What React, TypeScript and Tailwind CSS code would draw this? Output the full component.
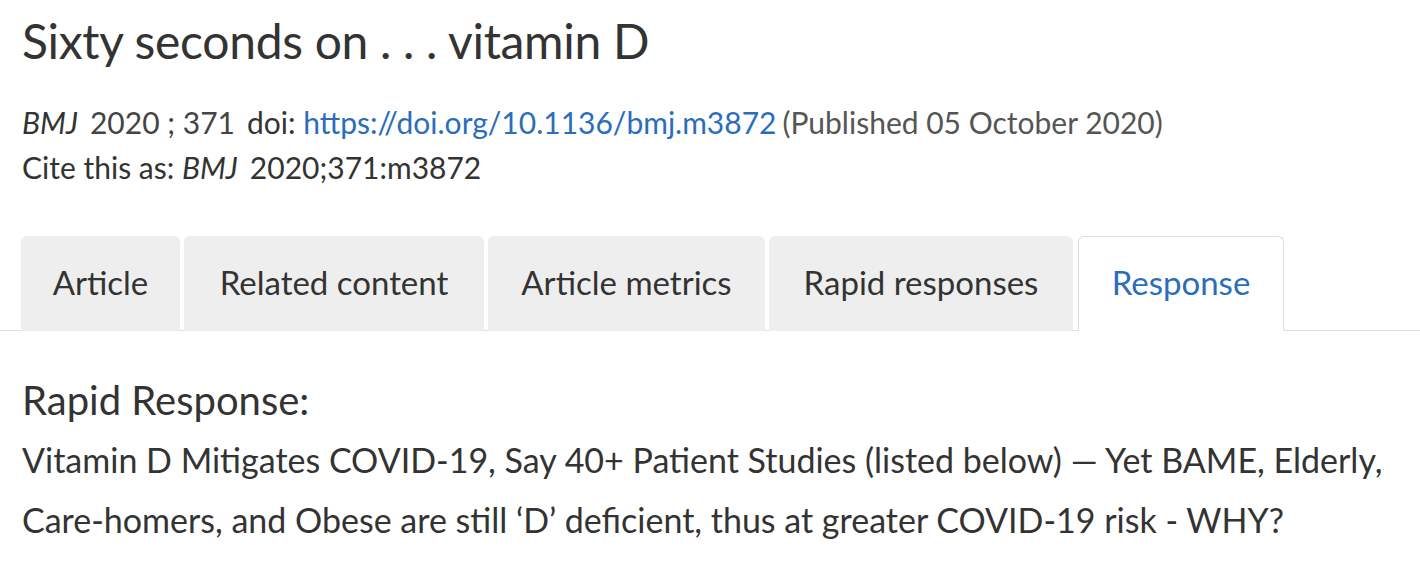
import React from "react";

const font = { fontFamily: "Lato, 'Noto Sans', sans-serif" };

export default function App() {
  const tabs = [
    { label: "Article", w: "w-[159px]" },
    { label: "Related content", w: "w-[300px]" },
    { label: "Article metrics", w: "w-[277px]" },
    { label: "Rapid responses", w: "w-[304px]" },
  ];
  return (
    <div className="w-[1420px] h-[566px] bg-white overflow-hidden text-[#333333]" style={font}>
      <div className="pl-[22px] pt-[11px]">
        <h1 className="text-[48px] leading-[60px] font-normal tracking-[-0.3px]">
          Sixty seconds on . . . vitamin D
        </h1>
        <div className="mt-[29px] text-[30px] leading-[45px]">
          <div>
            <i>BMJ</i>
            <span className="ml-[12px] text-[#444]">2020 ; 371</span>
            <span className="ml-[12px]">doi: </span>
            <a className="text-[#2a6ebb]">https://doi.org/10.1136/bmj.m3872</a>
            <span className="ml-[6px] text-[#555]">(Published 05 October 2020)</span>
          </div>
          <div>
            Cite this as: <i>BMJ</i>
            <span className="ml-[12px]">2020;371:m3872</span>
          </div>
        </div>
      </div>
      <div className="mt-[46px] flex items-end gap-[4px] border-b border-[#dddddd] pl-[21px] h-[95px]">
        {tabs.map((t) => (
          <div
            key={t.label}
            className={`${t.w} h-[95px] -mb-px bg-[#eeeeee] rounded-t-[6px] flex items-center justify-center text-[33px] pb-[2px]`}
          >
            {t.label}
          </div>
        ))}
        <div className="w-[206px] h-[95px] -mb-px bg-white border border-[#dddddd] border-b-white rounded-t-[6px] flex items-center justify-center text-[33px] text-[#2a6ebb] ml-[1px] pb-[2px]">
          Response
        </div>
      </div>
      <div className="pl-[22px] pt-[47px]">
        <div className="text-[40px] leading-[44px]">Rapid Response:</div>
        <div className="mt-[8px] text-[34px] leading-[60px] w-[1400px] whitespace-nowrap">
          Vitamin D Mitigates COVID-19, Say 40+ Patient Studies (listed below) — Yet BAME, Elderly,
          <br />
          Care-homers, and Obese are still ‘D’ deficient, thus at greater COVID-19 risk - WHY?
        </div>
      </div>
    </div>
  );
}
